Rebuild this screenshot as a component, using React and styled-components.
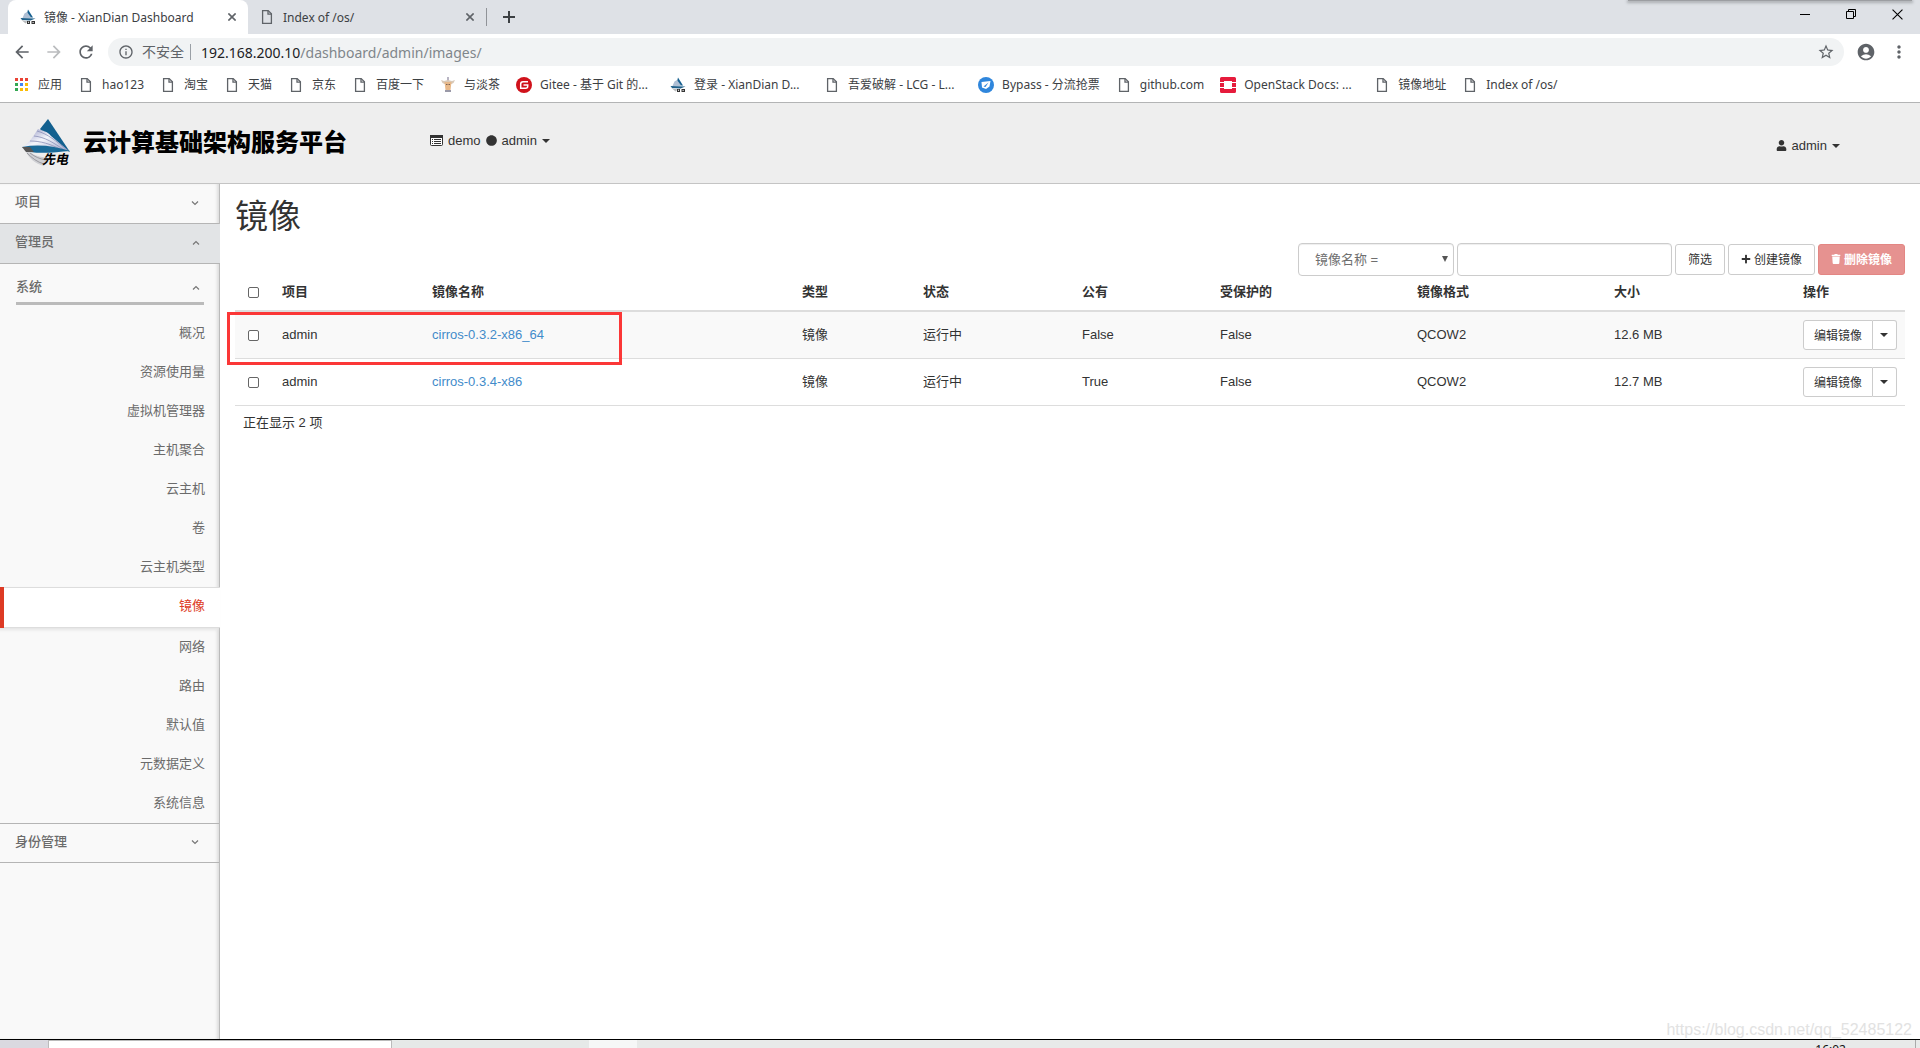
import React from 'react';
import styled, { createGlobalStyle } from 'styled-components';
import { FaUser, FaPlus, FaTrash, FaCircle } from 'react-icons/fa';
import { MdArrowBack, MdArrowForward, MdRefresh, MdInfoOutline, MdStarBorder, MdMoreVert, MdAccountCircle } from 'react-icons/md';

const uiFont = '"Noto Sans", "Noto Sans CJK SC", sans-serif';
const pageFont = '"Liberation Sans", "Noto Sans CJK SC", sans-serif';

const GlobalStyle = createGlobalStyle`
  *, *::before, *::after { box-sizing: border-box; }
  body { margin: 0; background: #fff; }
  button, input, select { font-family: inherit; margin: 0; }
  a { text-decoration: none; }
`;

const Screen = styled.div`
  height: 100vh;
  display: flex;
  flex-direction: column;
  overflow: hidden;
`;

/* ---------- browser chrome ---------- */

const Chrome = styled.header`
  font-family: ${uiFont};
  font-size: 12px;
  color: #3c4043;
  border-bottom: 1px solid #b3b4b5;
`;

const TabStrip = styled.div`
  position: relative;
  display: flex;
  align-items: stretch;
  height: 34px;
  padding-left: 8px;
  background: #dee1e6;
`;

const WindowShadow = styled.div`
  position: absolute;
  top: 0;
  right: 8px;
  width: 284px;
  height: 1px;
  background: #9c9ea2;
  box-shadow: 0 1px 3px 1px #a9acb0;
`;

const Tab = styled.div`
  display: flex;
  align-items: center;
  gap: 8px;
  width: ${(p) => (p.$active ? '240px' : '238px')};
  padding: 0 10px 0 ${(p) => (p.$active ? '12px' : '11px')};
  border-radius: 8px 8px 0 0;
  background: ${(p) => (p.$active ? '#fff' : 'transparent')};
`;

const TabTitle = styled.span`
  flex: 1;
  white-space: nowrap;
  overflow: hidden;
`;

const PlainButton = styled.button`
  display: flex;
  align-items: center;
  justify-content: center;
  width: ${(p) => p.$width || 16}px;
  height: ${(p) => p.$height || 16}px;
  padding: 0;
  border: 0;
  background: transparent;
  color: ${(p) => p.$color || '#5f6368'};
`;

const NewTab = styled.div`
  display: flex;
  align-items: center;
  padding-left: 14px;
  margin: 8px 0;
  border-left: 1px solid #909398;
`;

const WindowControls = styled.div`
  display: flex;
  margin-left: auto;
  height: 28px;
`;

const Toolbar = styled.div`
  display: flex;
  align-items: center;
  height: 36px;
  padding-left: 6px;
`;

const Omnibox = styled.div`
  flex: 1;
  display: flex;
  align-items: center;
  height: 28px;
  margin: 0 10px 0 6px;
  padding: 0 9px 0 10px;
  border-radius: 14px;
  background: #f1f3f4;
  font-size: 14px;
  color: #5f6368;
`;

const Insecure = styled.span`
  padding: 0 6px 0 8px;
  border-right: 1px solid #9aa0a6;
  margin-right: 10px;
  line-height: 16px;
`;

const Url = styled.span`
  flex: 1;
  color: #80868b;
  b { font-weight: 400; color: #202124; }
`;

const Bookmarks = styled.nav`
  display: flex;
  align-items: center;
  gap: 16px;
  height: 32px;
  padding: 0 14px 2px;
  overflow: hidden;
`;

const Bookmark = styled.a`
  display: flex;
  align-items: center;
  gap: 8px;
  height: 28px;
  flex: none;
  color: #3c4043;
`;

const BookmarkLabel = styled.span`
  width: ${(p) => (p.$long ? '114px' : 'auto')};
  line-height: 18px;
  white-space: nowrap;
`;

/* ---------- dashboard ---------- */

const Dashboard = styled.div`
  flex: 1;
  min-height: 0;
  display: flex;
  flex-direction: column;
  font-family: ${pageFont};
  font-size: 13px;
  line-height: 19px;
  color: #333;
  border-bottom: 1px solid #000;
`;

const TopBar = styled.div`
  display: flex;
  align-items: center;
  height: 81px;
  padding: 0 80px 0 22px;
  background: #eee;
  border-bottom: 1px solid #c4c4c4;
`;

const Brand = styled.a`
  display: flex;
  align-items: center;
  gap: 12px;
  width: 408px;
  color: #000;
  font-size: 24px;
  font-weight: 900;
  line-height: 30px;
  white-space: nowrap;
  svg { flex: none; }
`;

const MenuButton = styled.button`
  display: flex;
  align-items: center;
  gap: 5px;
  padding: ${(p) => (p.$lower ? '5px 0 0' : '0 0 5px')};
  margin-left: ${(p) => (p.$lower ? 'auto' : '0')};
  border: 0;
  background: transparent;
  font-size: 13px;
  line-height: 19px;
  color: #333;
`;

const Body = styled.div`
  flex: 1;
  min-height: 0;
  display: flex;
`;

const Sidebar = styled.nav`
  flex: none;
  width: 220px;
  background: #f9f9f9;
  border-right: 1px solid #bbb;
  box-shadow: inset -3px 0 3px -1px #ddd;
`;

const SectionButton = styled.button`
  display: flex;
  align-items: center;
  justify-content: space-between;
  border: 0;
  font-size: 13px;
  font-weight: 500;
  line-height: 19px;
  color: #6b6b6b;
  svg { margin-top: 2px; }
`;

const PanelButton = styled(SectionButton)`
  width: ${(p) => (p.$open ? '220px' : '100%')};
  height: ${(p) => (p.$last ? '39px' : '40px')};
  padding: 0 20px 4px 15px;
  border-bottom: 1px solid #b5b5b5;
  background: ${(p) => (p.$open ? '#e2e4e6' : 'transparent')};
`;

const GroupButton = styled(SectionButton)`
  width: 188px;
  height: 32px;
  margin: 9px 15px 9px 16px;
  padding: 0 4px 2px 0;
  border-bottom: 3px solid #bbb;
  background: transparent;
`;

const SubList = styled.ul`
  margin: 0;
  padding: 0;
  list-style: none;
  border-bottom: 1px solid #b5b5b5;
`;

const SubLink = styled.a`
  display: block;
  width: 220px;
  height: ${(p) => (p.$active ? '41px' : '39px')};
  padding: 9px 15px 0 0;
  text-align: right;
  line-height: 19px;
  color: ${(p) => (p.$active ? '#dd3a24' : '#6b6b6b')};
  background: ${(p) => (p.$active ? '#fff' : 'transparent')};
  border-left: ${(p) => (p.$active ? '4px solid #dd3a24' : '0')};
  box-shadow: ${(p) => (p.$active ? 'inset 0 1px 0 #ddd, inset 0 -1px 0 #ddd, -2px 2px 3px #e4e4e4' : 'none')};
`;

const Main = styled.main`
  flex: 1;
  min-width: 0;
  padding: 11px 15px;
`;

const Title = styled.h1`
  margin: 0;
  font-size: 33px;
  font-weight: 400;
  line-height: 44px;
`;

const Actions = styled.form`
  display: flex;
  align-items: center;
  justify-content: flex-end;
  gap: 3px;
  height: 33px;
  margin-top: 4px;
`;

const SelectWrap = styled.label`
  position: relative;
  width: 156px;
  svg {
    position: absolute;
    right: 6px;
    top: 13px;
  }
`;

const Select = styled.select`
  appearance: none;
  display: block;
  width: 100%;
  height: 33px;
  padding: 0 16px;
  border: 1px solid #ccc;
  border-radius: 4px;
  background: #fff;
  box-shadow: inset 0 1px 1px #eee;
  font-size: 13px;
  color: #6f6f6f;
`;

const SearchInput = styled.input`
  width: 215px;
  height: 33px;
  padding: 6px 12px;
  border: 1px solid #ccc;
  border-radius: 4px;
  box-shadow: inset 0 1px 1px #eee;
  font-size: 13px;
`;

const Button = styled.button`
  display: flex;
  align-items: center;
  gap: 3px;
  height: 31px;
  padding: 0 12px 2px;
  border: 1px solid ${(p) => (p.$danger ? '#e38683' : '#ccc')};
  border-radius: 3px;
  background: ${(p) => (p.$danger ? '#e69290' : '#fff')};
  color: ${(p) => (p.$danger ? '#fff' : '#333')};
  font-size: 12px;
  font-weight: ${(p) => (p.$danger ? '700' : '400')};
  white-space: nowrap;
`;

const RowButton = styled(Button)`
  height: 30px;
  padding: 0 10px 2px;
  border-radius: 3px 0 0 3px;
`;

const RowToggle = styled(Button)`
  height: 30px;
  padding: 0 8px 0 7px;
  border-left-width: 0;
  border-radius: 0 3px 3px 0;
`;

const TableArea = styled.div`
  position: relative;
`;

const Table = styled.table`
  width: 100%;
  table-layout: fixed;
  border-collapse: separate;
  border-spacing: 0;
  th, td { padding: 0 8px; text-align: left; white-space: nowrap; }
  th { height: 36px; padding-bottom: 4px; border-bottom: 2px solid #ddd; font-weight: 700; }
  td { height: 47px; border-bottom: 1px solid #ddd; padding-bottom: 2px; }
  td:last-child { padding-bottom: 0; }
  tbody tr:first-child td { background: #f9f9f9; }
  tfoot td { height: 32px; border: 0; padding-bottom: 0; }
  a { color: #428bca; }
`;

const Check = styled.input`
  appearance: none;
  display: block;
  width: 11px;
  height: 11px;
  margin: 2px 0 0 5px;
  border: 1px solid #666;
  border-radius: 2px;
  background: #fff;
`;

const ButtonGroup = styled.div`
  display: flex;
`;

const Highlight = styled.div`
  position: absolute;
  left: -8px;
  top: 36px;
  width: 395px;
  height: 53px;
  border: 3px solid #fb3737;
  pointer-events: none;
`;

const Watermark = styled.div`
  position: absolute;
  right: 8px;
  bottom: 8px;
  font-family: ${pageFont};
  font-size: 16px;
  line-height: 20px;
  color: #e2e2e2;
`;

/* ---------- taskbar ---------- */

const Taskbar = styled.footer`
  display: flex;
  flex: none;
  height: 8px;
  overflow: hidden;
  background: #e8eae9;
  font-family: ${uiFont};
  font-size: 12px;
  line-height: 12px;
  color: #111;
`;

const TaskSlot = styled.div`
  width: ${(p) => p.$width}px;
  background: ${(p) => p.$bg};
  border: ${(p) => (p.$framed ? '1px solid #bbb' : '0')};
  border-bottom: 0;
`;

const Clock = styled.time`
  margin-left: auto;
  padding: 4px 69px 0 0;
  margin-right: 4px;
  border-right: 1px solid #aaa;
`;

/* ---------- drawings ---------- */

const DocIcon = () => (
  <svg width="16" height="16" viewBox="0 0 16 16" fill="none" stroke="#5f6368" strokeWidth="1.3">
    <path d="M3.6 1.6h5.6l3.2 3.2v9.6H3.6z" />
    <path d="M9 1.8v3.4h3.4" />
  </svg>
);

const SailIcon = () => (
  <svg width="16" height="16" viewBox="0 0 16 16">
    <path d="M8 0.5L13 8.5H6z" fill="#155f8f" />
    <path d="M4.500 4.500L7 3l4.500 6L2.500 9z" fill="#aebfd4" />
    <path d="M0.500 9L15.500 9.500l-5 2L2 11z" fill="#20608a" />
    <path d="M1.500 11l4 3.500 2-2z" fill="#b9bbbd" />
    <path d="M7 12h3v3H7zM11.500 12H15v3h-3.500z" fill="#333" />
    <path d="M8 12.800h1v1H8zM12.600 13h1v1h-1z" fill="#fff" />
  </svg>
);

const AppsIcon = () => {
  const colors = ['#ea4335', '#ea4335', '#ea4335', '#34a853', '#4285f4', '#fbbc05', '#34a853', '#fbbc05', '#fbbc05'];
  return (
    <svg width="16" height="16" viewBox="0 0 16 16">
      {colors.map((c, i) => (
        <rect key={i} x={1 + (i % 3) * 5} y={1 + Math.floor(i / 3) * 5} width="3" height="3" fill={c} />
      ))}
    </svg>
  );
};

const TeaIcon = () => (
  <svg width="16" height="16" viewBox="0 0 16 16">
    <path d="M7.200 0h1.600v4H7.200z" fill="#a7a3b5" />
    <path d="M1 3l3 1 4-1 4 1 3-1-1.500 3-2 1H4.500l-2-1z" fill="#d9c9b8" />
    <path d="M4.500 5h7l-1 8h-5z" fill="#e8b98a" />
    <path d="M6 7h1.500v1H6zM8.500 7H10v1H8.500z" fill="#7d6250" />
    <path d="M5 13h6v2H5z" fill="#9a99a8" />
  </svg>
);

const GiteeIcon = () => (
  <svg width="16" height="16" viewBox="0 0 16 16">
    <circle cx="8" cy="8" r="8" fill="#d0121b" />
    <path d="M12 4.700H7A2.300 2.300 0 0 0 4.700 7v4.300h5a2 2 0 0 0 2-2V8H7.500" fill="none" stroke="#fff" strokeWidth="1.500" />
  </svg>
);

const BypassIcon = () => (
  <svg width="16" height="16" viewBox="0 0 16 16">
    <circle cx="8" cy="8" r="8" fill="#2f86dc" />
    <path d="M3.500 5l9-1-1 5.500-3.500 2.500-4-1.500z" fill="#fff" />
    <path d="M5.500 9.500L10.500 5.500 7.500 10z" fill="#2f86dc" />
  </svg>
);

const OpenStackIcon = () => (
  <svg width="16" height="16" viewBox="0 0 16 16" fill="#e61b3c">
    <path d="M1.500 0h13A1.500 1.500 0 0 1 16 1.500V5h-4V4H4v1H0V1.500A1.500 1.500 0 0 1 1.500 0z" />
    <path d="M0 6h4v4H0zM12 6h4v4h-4z" />
    <path d="M0 11h4v1h8v-1h4v3.500a1.500 1.500 0 0 1-1.500 1.500h-13A1.500 1.500 0 0 1 0 14.500z" />
  </svg>
);

const CloseIcon = ({ size = 8, thin }) => (
  <svg width={size} height={size} viewBox="0 0 10 10" stroke={thin ? '#000' : '#5f6368'} strokeWidth={thin ? 1 : 2}>
    <path d="M0.500 0.500l9 9M9.500 0.500l-9 9" />
  </svg>
);

const ListIcon = () => (
  <svg width="13" height="11" viewBox="0 0 13 11">
    <rect x="0.500" y="0.500" width="12" height="10" rx="1" fill="#fff" stroke="#333" />
    <path d="M0 0h13v3H0z" fill="#333" />
    <path d="M2 4.500h1M4 4.500h7M2 6.500h1M4 6.500h7M2 8.500h1M4 8.500h7" stroke="#333" />
  </svg>
);

const Caret = () => (
  <svg width="8" height="4" viewBox="0 0 8 4"><path d="M0 0h8L4 4z" fill="#333" /></svg>
);

const Chevron = ({ up }) => (
  <svg width="8" height="6" viewBox="0 0 8 6" fill="none" stroke="#777" strokeWidth="1.200">
    <path d={up ? 'M1 4.500L4 1.500l3 3' : 'M1 1.500l3 3 3-3'} />
  </svg>
);

const Logo = () => (
  <svg width="49" height="48" viewBox="0 0 49 48">
    <defs>
      <linearGradient id="sail" x1="0" y1="0" x2="1" y2="1">
        <stop offset="0" stopColor="#8f93c0" />
        <stop offset="0.450" stopColor="#f4f5fb" />
        <stop offset="1" stopColor="#9ba3c8" />
      </linearGradient>
    </defs>
    <path d="M26 0L48 33 32 26 18 10z" fill="#12608f" />
    <path d="M16 10c5 2 9 2 13 7l18 15C33 28 18 25 1 28 8 23 12 16 16 10z" fill="url(#sail)" />
    <path d="M15 12c11 3 19 10 30 19M12 17c11 1 20 7 30 14M8 22c11 0 20 3 30 8" fill="none" stroke="#8b90b8" strokeWidth="0.800" />
    <path d="M0 28c16-3 33-1 48 4-13 1-26 3-40 1z" fill="#1a6a98" />
    <path d="M0 28l8 0 4 5H4z" fill="#555" />
    <path d="M4 33c3 6 9 12 18 14l4-8c-8-1-15-3-18-6z" fill="#cfd0d4" />
    <path d="M5 34c5 5 10 9 17 11M8 34c5 4 10 6 16 7" fill="none" stroke="#8b8c92" strokeWidth="0.800" />
    <text x="20" y="45" fontSize="13" fontWeight="700" fontStyle="italic" fontFamily='"Noto Sans CJK SC", sans-serif' fill="#000">先电</text>
  </svg>
);

/* ---------- data ---------- */

const bookmarks = [
  { icon: AppsIcon, label: '应用' },
  { icon: DocIcon, label: 'hao123' },
  { icon: DocIcon, label: '淘宝' },
  { icon: DocIcon, label: '天猫' },
  { icon: DocIcon, label: '京东' },
  { icon: DocIcon, label: '百度一下' },
  { icon: TeaIcon, label: '与淡茶' },
  { icon: GiteeIcon, label: 'Gitee - 基于 Git 的...', long: true },
  { icon: SailIcon, label: '登录 - XianDian D...', long: true },
  { icon: DocIcon, label: '吾爱破解 - LCG - L...', long: true },
  { icon: BypassIcon, label: 'Bypass - 分流抢票' },
  { icon: DocIcon, label: 'github.com' },
  { icon: OpenStackIcon, label: 'OpenStack Docs: ...', long: true },
  { icon: DocIcon, label: '镜像地址' },
  { icon: DocIcon, label: 'Index of /os/' },
];

const systemItems = ['概况', '资源使用量', '虚拟机管理器', '主机聚合', '云主机', '卷', '云主机类型', '镜像', '网络', '路由', '默认值', '元数据定义', '系统信息'];

const columns = [
  { label: '项目', width: 150 },
  { label: '镜像名称' },
  { label: '类型', width: 121 },
  { label: '状态', width: 159 },
  { label: '公有', width: 138 },
  { label: '受保护的', width: 197 },
  { label: '镜像格式', width: 197 },
  { label: '大小', width: 189 },
  { label: '操作', width: 110 },
];

const images = [
  { name: 'cirros-0.3.2-x86_64', pub: 'False', size: '12.6 MB' },
  { name: 'cirros-0.3.4-x86', pub: 'True', size: '12.7 MB' },
];

export default function App() {
  return (
    <Screen>
      <GlobalStyle />
      <Chrome>
        <TabStrip>
          <Tab $active>
            <SailIcon />
            <TabTitle>镜像 - XianDian Dashboard</TabTitle>
            <PlainButton $width={12} aria-label="关闭标签页"><CloseIcon /></PlainButton>
          </Tab>
          <Tab>
            <DocIcon />
            <TabTitle>Index of /os/</TabTitle>
            <PlainButton $width={12} aria-label="关闭标签页"><CloseIcon /></PlainButton>
          </Tab>
          <NewTab>
            <PlainButton aria-label="新标签页">
              <svg width="12" height="12" viewBox="0 0 12 12" stroke="#3c4043" strokeWidth="2"><path d="M6 0v12M0 6h12" /></svg>
            </PlainButton>
          </NewTab>
          <WindowControls>
            <PlainButton $width={46} $height={28} aria-label="最小化">
              <svg width="10" height="10" stroke="#000"><path d="M0 5.500h10" /></svg>
            </PlainButton>
            <PlainButton $width={46} $height={28} aria-label="还原">
              <svg width="10" height="10" fill="none" stroke="#000"><path d="M0.500 2.500h7v7h-7zM2.500 2.500v-2h7v7h-2" /></svg>
            </PlainButton>
            <PlainButton $width={46} $height={28} aria-label="关闭"><CloseIcon size={11} thin /></PlainButton>
          </WindowControls>
          <WindowShadow />
        </TabStrip>
        <Toolbar>
          <PlainButton $width={32} $height={28} aria-label="后退"><MdArrowBack size={20} /></PlainButton>
          <PlainButton $width={32} $height={28} $color="#babcbe" aria-label="前进"><MdArrowForward size={20} /></PlainButton>
          <PlainButton $width={32} $height={28} aria-label="重新加载"><MdRefresh size={20} /></PlainButton>
          <Omnibox>
            <MdInfoOutline size={16} />
            <Insecure>不安全</Insecure>
            <Url><b>192.168.200.10</b>/dashboard/admin/images/</Url>
            <PlainButton $width={18} aria-label="收藏"><MdStarBorder size={18} /></PlainButton>
          </Omnibox>
          <PlainButton $width={24} $height={28} aria-label="用户"><MdAccountCircle size={20} /></PlainButton>
          <PlainButton $width={42} $height={28} aria-label="菜单"><MdMoreVert size={20} /></PlainButton>
        </Toolbar>
        <Bookmarks>
          {bookmarks.map(({ icon: Icon, label, long }) => (
            <Bookmark key={label} href="#">
              <Icon />
              <BookmarkLabel $long={long}>{label}</BookmarkLabel>
            </Bookmark>
          ))}
        </Bookmarks>
      </Chrome>

      <Dashboard>
        <TopBar>
          <Brand href="#"><Logo />云计算基础架构服务平台</Brand>
          <MenuButton>
            <ListIcon />
            demo
            <FaCircle size={11} />
            admin
            <Caret />
          </MenuButton>
          <MenuButton $lower>
            <FaUser size={11} />
            admin
            <Caret />
          </MenuButton>
        </TopBar>
        <Body>
          <Sidebar>
            <PanelButton>项目<Chevron /></PanelButton>
            <PanelButton $open>管理员<Chevron up /></PanelButton>
            <GroupButton>系统<Chevron up /></GroupButton>
            <SubList>
              {systemItems.map((item) => (
                <li key={item}><SubLink href="#" $active={item === '镜像'}>{item}</SubLink></li>
              ))}
            </SubList>
            <PanelButton $last>身份管理<Chevron /></PanelButton>
          </Sidebar>
          <Main>
            <Title>镜像</Title>
            <Actions onSubmit={(e) => e.preventDefault()}>
              <SelectWrap>
                <Select aria-label="筛选字段" defaultValue="name">
                  <option value="name">镜像名称 =</option>
                </Select>
                <svg width="6" height="6" viewBox="0 0 6 6"><path d="M0 0h6L3 6z" fill="#555" /></svg>
              </SelectWrap>
              <SearchInput type="text" aria-label="筛选" />
              <Button type="submit">筛选</Button>
              <Button type="button"><FaPlus size={10} />创建镜像</Button>
              <Button type="button" $danger><FaTrash size={10} />删除镜像</Button>
            </Actions>
            <TableArea>
              <Table>
                <colgroup>
                  <col width="39" />
                  {columns.map((c) => <col key={c.label} width={c.width} />)}
                </colgroup>
                <thead>
                  <tr>
                    <th><Check type="checkbox" aria-label="全选" /></th>
                    {columns.map((c) => <th key={c.label}>{c.label}</th>)}
                  </tr>
                </thead>
                <tbody>
                  {images.map((img) => (
                    <tr key={img.name}>
                      <td><Check type="checkbox" aria-label={img.name} /></td>
                      <td>admin</td>
                      <td><a href="#">{img.name}</a></td>
                      <td>镜像</td>
                      <td>运行中</td>
                      <td>{img.pub}</td>
                      <td>False</td>
                      <td>QCOW2</td>
                      <td>{img.size}</td>
                      <td>
                        <ButtonGroup>
                          <RowButton>编辑镜像</RowButton>
                          <RowToggle aria-label="更多操作"><Caret /></RowToggle>
                        </ButtonGroup>
                      </td>
                    </tr>
                  ))}
                </tbody>
                <tfoot>
                  <tr><td colSpan={10}>正在显示 2 项</td></tr>
                </tfoot>
              </Table>
              <Highlight />
            </TableArea>
          </Main>
        </Body>
      </Dashboard>

      <Taskbar>
        <TaskSlot $width={48} $bg="#dad9e0" />
        <TaskSlot $width={344} $bg="#fff" $framed />
        <TaskSlot $width={197} $bg="#e6e9e8" />
        <TaskSlot $width={48} $bg="#f6f7f7" />
        <Clock>16:02</Clock>
      </Taskbar>
      <Watermark>https://blog.csdn.net/qq_52485122</Watermark>
    </Screen>
  );
}
